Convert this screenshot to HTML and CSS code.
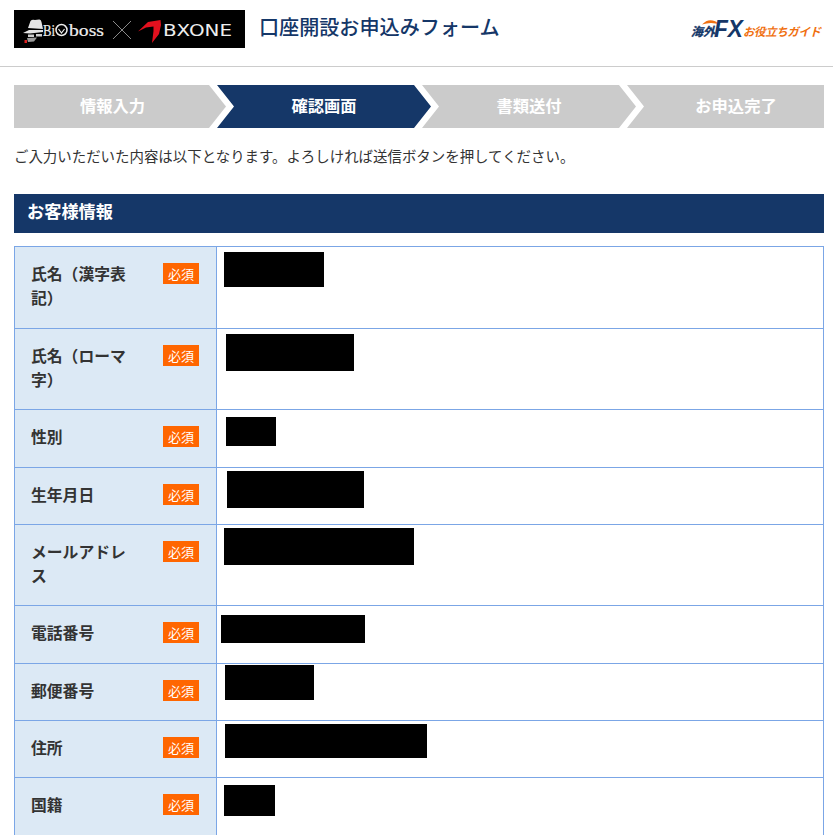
FILE: index.html
```html
<!DOCTYPE html>
<html lang="ja">
<head>
  <meta charset="UTF-8" />
  <meta name="viewport" content="width=device-width, initial-scale=1.0"/>
  <title>口座開設お申込みフォーム</title>
  <link rel="stylesheet" href="styles.css">
</head>
<body>
  <header class="site-header">
    <div class="brand">
      <svg class="brand-logo" viewBox="0 0 231 38" width="231" height="38" role="img" aria-label="Bigboss x BXONE">
        <rect width="231" height="38" fill="#000"/>
        <!-- hat + glasses -->
        <path d="M14 18 L16.500 11 Q18 9 21 10 L25 9.500 Q27 9 27.500 12 L29 19 Z" fill="#e4e4e4"/>
        <path d="M9 23 L15 20 L29 20 L29 22 L16 23.500 Z" fill="#e4e4e4"/>
        <path d="M14 24.500 H20 V27 H14 Z M22 24 H28 V26.500 H22 Z" fill="#cfcfcf"/>
        <path d="M13 28 L23 27.500 L20 31.500 L14 32 Z" fill="#9c9c9c"/>
        <rect x="10.500" y="30" width="2.500" height="3" fill="#e02020"/>
        <text class="logo-serif" x="29" y="25.500" textLength="12" lengthAdjust="spacingAndGlyphs">Bi</text>
        <circle cx="47.500" cy="20" r="5.500" fill="none" stroke="#eee" stroke-width="1.500"/>
        <path d="M44.500 19 L47.500 23 L50.500 19" fill="none" stroke="#eee" stroke-width="1.200"/>
        <text class="logo-serif" x="55" y="25.500" textLength="35" lengthAdjust="spacingAndGlyphs">boss</text>
        <path d="M99 11 L117 29 M117 11 L99 29" stroke="#8a8a8a" stroke-width="1"/>
        <!-- red swoosh -->
        <path d="M124 21.500 L134 12 L146.500 10 L147 15 L145 24 L138 33 L139.500 21 L139.500 16.500 L132 17.500 Z" fill="#e3101e"/>
        <text class="logo-sans" x="149" y="25.500" textLength="69" lengthAdjust="spacingAndGlyphs">BXONE</text>
      </svg>
      <h1 class="form-title">口座開設お申込みフォーム</h1>
    </div>
    <svg class="guide-logo" viewBox="0 0 132 24" width="132" height="24" role="img" aria-label="海外FXお役立ちガイド">
      <path d="M12 7.500 Q20 -1 30 7.500 Q21 4.500 12 7.500 Z" fill="#f07010"/>
      <text class="guide-ja" x="1" y="19">海外</text>
      <text class="guide-fx" x="24" y="19.500" textLength="29" lengthAdjust="spacingAndGlyphs">FX</text>
      <text class="guide-orange" x="53" y="19" textLength="78">お役立ちガイド</text>
    </svg>
  </header>

  <main class="content">
    <ol class="steps">
      <li class="step step-first">情報入力</li>
      <li class="step step-current">確認画面</li>
      <li class="step">書類送付</li>
      <li class="step step-last">お申込完了</li>
    </ol>

    <p class="lead">ご入力いただいた内容は以下となります。よろしければ送信ボタンを押してください。</p>

    <h2 class="section-title">お客様情報</h2>

    <table class="info-table">
      <tr class="row-tall row-tallest">
        <th><div class="label"><span class="label-text">氏名（漢字表記）</span><span class="badge">必須</span></div></th>
        <td><div class="redact redact-name"></div></td>
      </tr>
      <tr class="row-tall">
        <th><div class="label"><span class="label-text">氏名（ローマ字）</span><span class="badge">必須</span></div></th>
        <td><div class="redact redact-roman"></div></td>
      </tr>
      <tr class="row-wide">
        <th><div class="label"><span class="label-text">性別</span><span class="badge">必須</span></div></th>
        <td><div class="redact redact-gender"></div></td>
      </tr>
      <tr>
        <th><div class="label"><span class="label-text">生年月日</span><span class="badge">必須</span></div></th>
        <td><div class="redact redact-birth"></div></td>
      </tr>
      <tr class="row-tall">
        <th><div class="label"><span class="label-text">メールアドレス</span><span class="badge">必須</span></div></th>
        <td><div class="redact redact-mail"></div></td>
      </tr>
      <tr class="row-wide">
        <th><div class="label"><span class="label-text">電話番号</span><span class="badge">必須</span></div></th>
        <td><div class="redact redact-tel"></div></td>
      </tr>
      <tr>
        <th><div class="label"><span class="label-text">郵便番号</span><span class="badge">必須</span></div></th>
        <td><div class="redact redact-zip"></div></td>
      </tr>
      <tr>
        <th><div class="label"><span class="label-text">住所</span><span class="badge">必須</span></div></th>
        <td><div class="redact redact-address"></div></td>
      </tr>
      <tr class="row-wide">
        <th><div class="label"><span class="label-text">国籍</span><span class="badge">必須</span></div></th>
        <td><div class="redact redact-nation"></div></td>
      </tr>
    </table>
  </main>
</body>
</html>
```

FILE: styles.css
```css
:root {
  --navy: #153768;
  --grey: #cbcbcb;
  --line: #7ba6e6;
  --label-bg: #dce9f5;
  --orange: #ff6600;
}

html, body {
  height: 835px;
  overflow: hidden;
}

body {
  margin: 0;
  background: #fff;
  color: #333;
  font-family: "Noto Sans CJK JP", "Noto Sans", sans-serif;
}

.site-header {
  height: 66px;
  padding: 0 11px 0 14px;
  border-bottom: 1px solid #ccc;
  display: flex;
  justify-content: space-between;
  align-items: flex-start;
}

.brand {
  display: flex;
  align-items: center;
  gap: 14px;
  margin-top: 10px;
}

.brand-logo {
  display: block;
}

.logo-serif {
  font-family: "Liberation Serif", serif;
  font-size: 17.500px;
  fill: #eee;
  stroke: #eee;
  stroke-width: 0.200px;
}

.logo-sans {
  font-family: "DejaVu Sans", sans-serif;
  font-size: 15px;
  fill: #eee;
}

.form-title {
  margin: 0 0 3px;
  font-size: 20.100px;
  font-weight: 500;
  line-height: 1.4;
  color: var(--navy);
}

.guide-logo {
  display: block;
  margin-top: 17px;
}

.guide-ja {
  font-size: 12px;
  font-weight: 700;
  font-style: italic;
  fill: var(--navy);
  stroke: var(--navy);
  stroke-width: 0.300px;
}

.guide-fx {
  font-family: "Liberation Sans", sans-serif;
  font-size: 23px;
  font-weight: 700;
  font-style: italic;
  fill: var(--navy);
}

.guide-orange {
  font-size: 11.500px;
  font-weight: 700;
  font-style: italic;
  fill: #f07010;
}

.content {
  padding: 18px 9px 0 14px;
}

.steps {
  list-style: none;
  margin: 0;
  padding: 0;
  display: flex;
}

.step {
  width: 214px;
  height: 43px;
  margin-left: -9px;
  padding: 0 17px 4px;
  box-sizing: border-box;
  display: flex;
  justify-content: center;
  align-items: center;
  background: var(--grey);
  color: #fff;
  font-size: 16.300px;
  font-weight: 700;
  clip-path: polygon(0 0, calc(100% - 17px) 0, 100% 50%, calc(100% - 17px) 100%, 0 100%, 17px 50%);
}

.step-first {
  width: 212px;
  margin-left: 0;
  padding-left: 2px;
  clip-path: polygon(0 0, calc(100% - 17px) 0, 100% 50%, calc(100% - 17px) 100%, 0 100%);
}

.step-current {
  background: var(--navy);
}

.step-last {
  width: 197px;
  padding-left: 21px;
  padding-right: 0;
  clip-path: polygon(0 0, 100% 0, 100% 100%, 0 100%, 17px 50%);
}

.lead {
  margin: 17px 0 0;
  font-size: 14.450px;
  line-height: 22px;
}

.section-title {
  margin: 27px 0 13px;
  height: 39px;
  padding-left: 13px;
  background: var(--navy);
  color: #fff;
  font-size: 17.200px;
  font-weight: 700;
  line-height: 33px;
}

.info-table {
  width: 810px;
  border-collapse: collapse;
  table-layout: fixed;
}

.info-table tr {
  height: 57px;
}

.info-table .row-wide {
  height: 58px;
}

.info-table .row-tall {
  height: 81px;
}

.info-table .row-tallest {
  height: 82px;
}

.info-table th,
.info-table td {
  border: 1px solid var(--line);
  padding: 0;
  vertical-align: top;
  text-align: left;
}

.info-table th {
  width: 201px;
  background: var(--label-bg);
}

.label {
  display: flex;
  justify-content: space-between;
  align-items: flex-start;
  padding: 15px 17px 15px 16px;
  font-size: 15.800px;
  font-weight: 700;
  line-height: 24px;
}

.label-text {
  width: 100px;
}

.badge {
  flex: none;
  width: 36px;
  height: 21px;
  margin-top: 1px;
  background: var(--orange);
  color: #fff;
  font-size: 13px;
  font-weight: 400;
  line-height: 21px;
  text-align: center;
}

.redact {
  background: #000;
}

.redact-name { width: 100px; height: 35px; margin: 5px 0 0 7px; }
.redact-roman { width: 128px; height: 37px; margin: 5px 0 0 9px; }
.redact-gender { width: 50px; height: 29px; margin: 7px 0 0 9px; }
.redact-birth { width: 137px; height: 37px; margin: 3px 0 0 10px; }
.redact-mail { width: 190px; height: 37px; margin: 3px 0 0 7px; }
.redact-tel { width: 144px; height: 28px; margin: 9px 0 0 4px; }
.redact-zip { width: 89px; height: 35px; margin: 1px 0 0 8px; }
.redact-address { width: 202px; height: 34px; margin: 3px 0 0 8px; }
.redact-nation { width: 51px; height: 31px; margin: 7px 0 0 7px; }
```
